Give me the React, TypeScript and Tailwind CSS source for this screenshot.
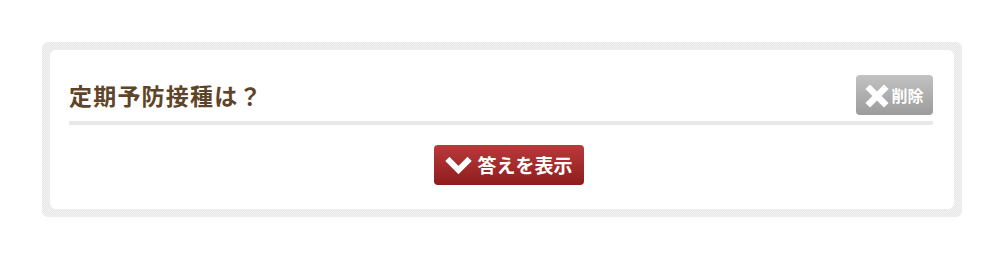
import React from "react";

export default function App() {
  return (
    <div
      className="w-[1004px] h-[260px] bg-white pt-[42px] pl-[42px]"
      style={{ fontFamily: '"Noto Sans CJK JP", "Noto Sans", sans-serif' }}
    >
      <div className="w-[920px] rounded-[6px] p-[8px] bg-[#ececec] bg-[repeating-conic-gradient(#e8e8e8_0_25%,#f1f1f1_0_50%)] bg-size-[2px_2px]">
        <div className="bg-white rounded-[6px] pl-[19px] pr-[21px] pt-[25px] pb-[24px]">
          <div className="flex items-center justify-between h-[40px]">
            <h2 className="text-[23px] font-bold text-[#5e4529] leading-none tracking-[1.2px]">
              定期予防接種は？
            </h2>
            <button className="flex items-center gap-[2px] h-[40px] w-[77px] justify-center rounded-[4px] bg-gradient-to-b from-[#c2c2c2] to-[#9c9c9c] text-white text-[16px] font-bold">
              <svg width="24" height="24" viewBox="0 0 24 24" className="mt-[1px]">
                <path d="M5 5 L19 19 M19 5 L5 19" stroke="white" strokeWidth="6.5" strokeLinecap="square" />
              </svg>
              <span>削除</span>
            </button>
          </div>
          <div className="h-[4px] bg-[#e8e8e8] mt-[6px]" />
          <div className="flex justify-center mt-[20px] pl-[16px]">
            <button className="flex items-center justify-center gap-[5px] h-[40px] w-[150px] rounded-[4px] bg-gradient-to-b from-[#b93a3b] to-[#8f1c1d] text-white text-[19px] font-bold">
              <svg width="27" height="24" viewBox="0 0 27 24">
                <path d="M4.5 8 L13.5 17 L22.5 8" fill="none" stroke="white" strokeWidth="6" strokeLinecap="square" strokeLinejoin="miter" />
              </svg>
              <span>答えを表示</span>
            </button>
          </div>
        </div>
      </div>
    </div>
  );
}
